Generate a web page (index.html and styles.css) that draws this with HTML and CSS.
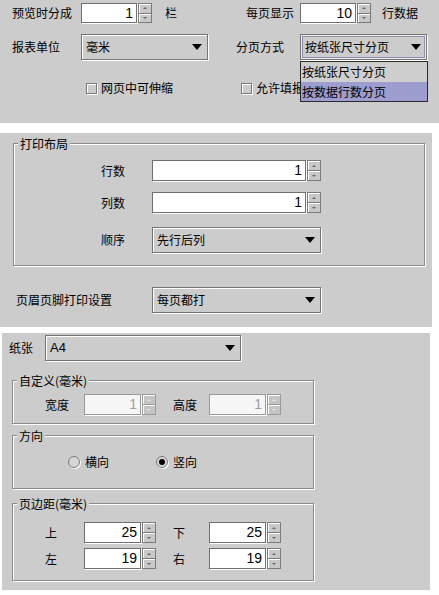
FILE: index.html
```html
<!DOCTYPE html>
<html lang="zh-CN">
<head>
<meta charset="utf-8">
<title>打印设置</title>
<link rel="stylesheet" href="styles.css">
</head>
<body>
<div class="panel p1">
  <span class="lbl c1">预览时分成</span>
  <div class="c2 inline">
    <div class="spin"><span class="spin-field">1</span><span class="spin-btns"><span class="sb up"></span><span class="sb down"></span></span></div>
    <span class="lbl after-13">栏</span>
  </div>
  <span class="lbl c4 right">每页显示</span>
  <div class="c5 inline">
    <div class="spin"><span class="spin-field">10</span><span class="spin-btns"><span class="sb up"></span><span class="sb down"></span></span></div>
    <span class="lbl after-11">行数据</span>
  </div>

  <span class="lbl c1">报表单位</span>
  <div class="c2 combo w127"><span>毫米</span><span class="arrow"></span></div>
  <span class="lbl c4">分页方式</span>
  <div class="c5 combo w127 focused"><span>按纸张尺寸分页</span><span class="arrow"></span>
    <div class="popup">
      <div class="item">按纸张尺寸分页</div>
      <div class="item sel">按数据行数分页</div>
    </div>
  </div>

  <label class="c2 check r3 ml5"><span class="box"></span><span>网页中可伸缩</span></label>
  <label class="c45 check r3 ml5"><span class="box"></span><span>允许填报</span></label>
</div>

<div class="panel p2">
  <div class="group g-layout">
    <span class="group-title">打印布局</span>
    <div class="frow first">
      <span class="lbl flabel">行数</span>
      <div class="spin h21 w169"><span class="spin-field">1</span><span class="spin-btns"><span class="sb up"></span><span class="sb down"></span></span></div>
    </div>
    <div class="frow">
      <span class="lbl flabel">列数</span>
      <div class="spin h21 w169"><span class="spin-field">1</span><span class="spin-btns"><span class="sb up"></span><span class="sb down"></span></span></div>
    </div>
    <div class="frow gap14">
      <span class="lbl flabel">顺序</span>
      <div class="combo w169"><span>先行后列</span><span class="arrow"></span></div>
    </div>
  </div>
  <div class="hf-row">
    <span class="lbl hf-label">页眉页脚打印设置</span>
    <div class="combo w169"><span>每页都打</span><span class="arrow"></span></div>
  </div>
</div>

<div class="panel p3">
  <div class="paper-row">
    <span class="lbl paper-label">纸张</span>
    <div class="combo w196"><span class="num">A4</span><span class="arrow"></span></div>
  </div>

  <div class="group g-custom">
    <span class="group-title">自定义(毫米)</span>
    <div class="pair-grid mt6">
      <span class="lbl">宽度</span>
      <div class="spin h21 disabled"><span class="spin-field">1</span><span class="spin-btns"><span class="sb up"></span><span class="sb down"></span></span></div>
      <span class="lbl">高度</span>
      <div class="spin h21 disabled"><span class="spin-field">1</span><span class="spin-btns"><span class="sb up"></span><span class="sb down"></span></span></div>
    </div>
  </div>

  <div class="group g-dir">
    <span class="group-title">方向</span>
    <div class="radio-row">
      <label class="radio-item"><span class="radio"></span><span>横向</span></label>
      <label class="radio-item"><span class="radio on"></span><span>竖向</span></label>
    </div>
  </div>

  <div class="group g-margin">
    <span class="group-title">页边距(毫米)</span>
    <div class="pair-grid mt11">
      <span class="lbl">上</span>
      <div class="spin h21"><span class="spin-field">25</span><span class="spin-btns"><span class="sb up"></span><span class="sb down"></span></span></div>
      <span class="lbl">下</span>
      <div class="spin h21"><span class="spin-field">25</span><span class="spin-btns"><span class="sb up"></span><span class="sb down"></span></span></div>
      <span class="lbl">左</span>
      <div class="spin h21"><span class="spin-field">19</span><span class="spin-btns"><span class="sb up"></span><span class="sb down"></span></span></div>
      <span class="lbl">右</span>
      <div class="spin h21"><span class="spin-field">19</span><span class="spin-btns"><span class="sb up"></span><span class="sb down"></span></span></div>
    </div>
  </div>
</div>
</body>
</html>
```

FILE: styles.css
```css
html, body {
  margin: 0;
  padding: 0;
  background: #fff;
}
body {
  width: 439px;
  height: 595px;
  overflow: hidden;
  font-family: "Noto Sans CJK SC", "Liberation Sans", sans-serif;
  font-size: 12px;
  line-height: 14px;
  color: #000;
}
.panel {
  background: #cccccc;
  box-sizing: border-box;
}
.lbl { white-space: nowrap; }
.num { font-family: "Liberation Sans", sans-serif; font-size: 13px; }

/* ---------- panel 1 ---------- */
.p1 {
  height: 123px;
  padding: 3px 0 0 12px;
  display: grid;
  grid-template-columns: 69px 127px 28px 64px 127px;
  grid-template-rows: 20px 26px 25px;
  row-gap: 11px;
  align-items: center;
}
.c1 { grid-column: 1; }
.c2 { grid-column: 2; }
.c4 { grid-column: 4; justify-self: start; }
.c4.right { justify-self: end; margin-right: 6px; }
.c5 { grid-column: 5; }
.c45 { grid-column: 4 / span 2; }
.inline { display: flex; align-items: center; }
.after-13 { margin-left: 13px; }
.after-11 { margin-left: 11px; }
.r3 { align-self: end; }
.ml5 { margin-left: 5px; }

/* ---------- spinner ---------- */
.spin {
  display: flex;
  width: 71px;
  height: 20px;
  flex: none;
}
.spin.h21 { height: 21px; }
.spin.w169 { width: 169px; }
.spin-field {
  flex: 1;
  box-sizing: border-box;
  border: 1px solid #6f6f6f;
  box-shadow: 1px 1px 0 #fff;
  background: #fff;
  text-align: right;
  padding-right: 3px;
  font-family: "Liberation Sans", sans-serif;
  font-size: 14px;
  line-height: 18px;
}
.spin.h21 .spin-field { line-height: 19px; }
.spin-btns {
  width: 14px;
  margin-left: 1px;
  display: flex;
  flex-direction: column;
}
.sb {
  flex: 1;
  box-sizing: border-box;
  border: 1px solid #7a7a7a;
  background: #c8c8c8;
  box-shadow: inset 1px 1px 0 #fff;
  display: flex;
  align-items: center;
  justify-content: center;
}
.sb.down { border-top: 0; }
.sb::before {
  content: "";
  width: 0;
  height: 0;
  border-left: 2px solid transparent;
  border-right: 2px solid transparent;
}
.sb.up::before { border-bottom: 2px solid #666; }
.sb.down::before { border-top: 2px solid #666; }

.spin.disabled .spin-field {
  background: #f6f6f6;
  color: #a0a0a0;
  border-color: #9a9a9a;
}
.spin.disabled .sb {
  background: #c4c4c4;
  border-color: #9a9a9a;
}
.spin.disabled .sb.up::before { border-bottom-color: #e8e8e8; }
.spin.disabled .sb.down::before { border-top-color: #e8e8e8; }

/* ---------- combo ---------- */
.combo {
  box-sizing: border-box;
  height: 26px;
  border: 1px solid #747474;
  box-shadow: inset 1px 1px 0 #fff, 1px 1px 0 #fff;
  background: #cccccc;
  display: flex;
  align-items: center;
  justify-content: space-between;
  padding: 0 5px 0 4px;
  position: relative;
  flex: none;
}
.combo.w127 { width: 127px; }
.combo.w169 { width: 169px; }
.combo.w196 { width: 196px; }
.combo.focused {
  box-shadow: inset 0 0 0 1px #ececec, inset 0 0 0 2px #8e8eae, 1px 1px 0 #fff;
}
.arrow {
  width: 0;
  height: 0;
  border-left: 5.5px solid transparent;
  border-right: 5.5px solid transparent;
  border-top: 6px solid #000;
}
.popup {
  position: absolute;
  left: -1px;
  top: 26px;
  width: 128px;
  box-sizing: border-box;
  border: 1px solid #2a2a2a;
  background: #cfcfcf;
  z-index: 5;
}
.popup .item {
  height: 20px;
  line-height: 20px;
  padding-left: 1px;
  white-space: nowrap;
}
.popup .item.sel {
  height: 19px;
  line-height: 19px;
  background: #9d9dcf;
}

/* ---------- checkbox / radio ---------- */
.check {
  display: flex;
  align-items: center;
  height: 16px;
  white-space: nowrap;
}
.box {
  width: 11px;
  height: 11px;
  box-sizing: border-box;
  border: 1px solid #7a7a7a;
  box-shadow: inset 1px 1px 0 #fff, 1px 1px 0 #fff;
  background: #cccccc;
  margin-right: 4px;
  flex: none;
}
.radio-row {
  margin-top: 12px;
  height: 14px;
  padding-left: 55px;
  display: flex;
  align-items: center;
  gap: 47px;
}
.radio-item {
  display: flex;
  align-items: center;
  gap: 5px;
  white-space: nowrap;
}
.radio {
  width: 12px;
  height: 12px;
  box-sizing: border-box;
  border-radius: 50%;
  border: 1px solid #7a7a7a;
  background: #d6d6d6;
  box-shadow: 1px 1px 0 #fff;
  display: flex;
  align-items: center;
  justify-content: center;
  flex: none;
}
.radio.on::after {
  content: "";
  width: 6px;
  height: 6px;
  border-radius: 50%;
  background: #000;
}

/* ---------- group boxes ---------- */
.group {
  box-sizing: border-box;
  border: 1px solid #8a8a8a;
  box-shadow: inset 1px 1px 0 #fff, 1px 1px 0 #fff;
}
.group-title {
  display: block;
  width: fit-content;
  margin: -7px 0 0 4px;
  padding: 0 2px;
  background: #cccccc;
  line-height: 14px;
  white-space: nowrap;
}

/* ---------- panel 2 ---------- */
.p2 {
  width: 432px;
  height: 194px;
  margin-top: 10px;
  padding-top: 10px;
}
.g-layout {
  margin-left: 13px;
  width: 412px;
  padding-bottom: 12px;
}
.frow {
  display: flex;
  align-items: center;
  margin-top: 11px;
}
.frow.first { margin-top: 9px; }
.frow.gap14 { margin-top: 14px; }
.flabel {
  width: 111px;
  margin-right: 27px;
  text-align: right;
}
.hf-row {
  display: flex;
  align-items: center;
  margin-top: 21px;
  padding-left: 16px;
}
.hf-label { width: 136px; }

/* ---------- panel 3 ---------- */
.p3 {
  width: 428px;
  height: 257px;
  margin: 6px 0 0 2px;
  padding-top: 2px;
}
.paper-row {
  display: flex;
  align-items: center;
  padding-left: 7px;
}
.paper-label { width: 36px; }
.p3 .group {
  margin-left: 10px;
  width: 302px;
}
.g-custom { margin-top: 19px; padding-bottom: 8px; }
.g-dir { margin-top: 11px; padding-bottom: 19px; }
.g-margin { margin-top: 14px; padding-bottom: 11px; }
.pair-grid {
  display: grid;
  grid-template-columns: 39px 89px 36px 72px;
  grid-auto-rows: 21px;
  row-gap: 5px;
  align-items: center;
  padding-left: 32px;
}
.pair-grid .spin { width: 72px; }
.mt6 { margin-top: 6px; }
.mt11 { margin-top: 11px; }
```
